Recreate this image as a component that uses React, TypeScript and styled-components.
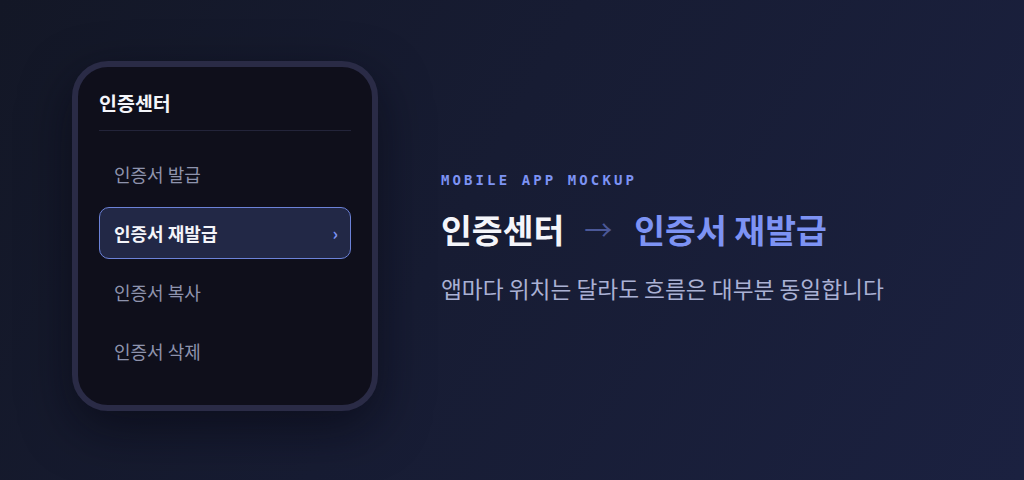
import React from 'react'
import styled, { createGlobalStyle } from 'styled-components'

const Colors = {
  PageFrom: '#131726',
  PageTo: '#1b2140',
  FrameBorder: '#2a2b46',
  Screen: '#0f0f1b',
  Divider: '#23243a',
  Title: '#f4f5fa',
  Item: '#8e93ad',
  ActiveBg: '#222846',
  ActiveBorder: '#6c82d8',
  Accent: '#7d93f4',
  Arrow: '#4b5898',
  Sub: '#aab1d4'
}

const KR = `'Noto Sans CJK KR', 'Noto Sans', sans-serif`

const MENU = ['인증서 발급', '인증서 재발급', '인증서 복사', '인증서 삭제']
const ACTIVE_INDEX = 1

const GlobalStyle = createGlobalStyle`
  html, body {
    margin: 0;
    padding: 0;
    width: 100%;
    height: 100%;
  }
  body {
    font-family: ${KR};
    background: ${Colors.PageFrom};
  }
`

const Page = styled.div`
  width: 1024px;
  height: 480px;
  box-sizing: border-box;
  padding-left: 72px;
  display: flex;
  align-items: center;
  gap: 63px;
  overflow: hidden;
  background: linear-gradient(120deg, ${Colors.PageFrom} 0%, #171c33 45%, ${Colors.PageTo} 100%);
`

const Phone = styled.div`
  width: 306px;
  height: 350px;
  box-sizing: border-box;
  border: 6px solid ${Colors.FrameBorder};
  border-radius: 36px;
  background: ${Colors.Screen};
  padding: 23px 21px 27px;
  display: flex;
  flex-direction: column;
  box-shadow: 0 18px 50px rgba(5, 6, 14, 0.55);
  margin-top: -9px;
`

const ScreenTitle = styled.div`
  font-size: 19.5px;
  line-height: 26px;
  font-weight: 700;
  color: ${Colors.Title};
  padding-bottom: 14px;
  border-bottom: 1px solid ${Colors.Divider};
`

const Menu = styled.div`
  margin-top: 17px;
  display: flex;
  flex-direction: column;
  gap: 7px;
`

const MenuItem = styled.div<{ $active?: boolean }>`
  height: 52px;
  box-sizing: border-box;
  display: flex;
  align-items: center;
  justify-content: space-between;
  padding: 0 14px;
  border-radius: 10px;
  font-size: 18px;
  font-weight: ${({ $active }) => ($active ? 700 : 400)};
  color: ${({ $active }) => ($active ? Colors.Title : Colors.Item)};
  background: ${({ $active }) => ($active ? Colors.ActiveBg : 'transparent')};
  border: 1px solid ${({ $active }) => ($active ? Colors.ActiveBorder : 'transparent')};
`

const Chevron = styled.span`
  font-size: 17px;
  font-weight: 700;
  color: ${Colors.Accent};
  margin-right: -2px;
`

const Info = styled.div`
  display: flex;
  flex-direction: column;
  margin-top: -6px;
`

const Eyebrow = styled.div`
  font-family: 'DejaVu Sans Mono', 'Liberation Mono', monospace;
  font-size: 14px;
  line-height: 18px;
  letter-spacing: 3.1px;
  font-weight: 700;
  color: ${Colors.Accent};
`

const Heading = styled.div`
  margin-top: 18px;
  font-size: 33.5px;
  line-height: 44px;
  font-weight: 700;
  color: ${Colors.Title};
  display: flex;
  align-items: center;
`

const Arrow = styled.span`
  font-size: 28px;
  font-weight: 400;
  color: ${Colors.Arrow};
  margin: 0 22px 0 20px;
`

const Current = styled.span`
  color: ${Colors.Accent};
`

const Sub = styled.div`
  margin-top: 23px;
  font-size: 22.7px;
  line-height: 30px;
  color: ${Colors.Sub};
`

export default function App() {
  return (
    <>
      <GlobalStyle />
      <Page>
        <Phone>
          <ScreenTitle>인증센터</ScreenTitle>
          <Menu>
            {MENU.map((label, i) => (
              <MenuItem key={label} $active={i === ACTIVE_INDEX}>
                {label}
                {i === ACTIVE_INDEX && <Chevron>›</Chevron>}
              </MenuItem>
            ))}
          </Menu>
        </Phone>
        <Info>
          <Eyebrow>MOBILE APP MOCKUP</Eyebrow>
          <Heading>
            인증센터
            <Arrow>→</Arrow>
            <Current>인증서 재발급</Current>
          </Heading>
          <Sub>앱마다 위치는 달라도 흐름은 대부분 동일합니다</Sub>
        </Info>
      </Page>
    </>
  )
}
